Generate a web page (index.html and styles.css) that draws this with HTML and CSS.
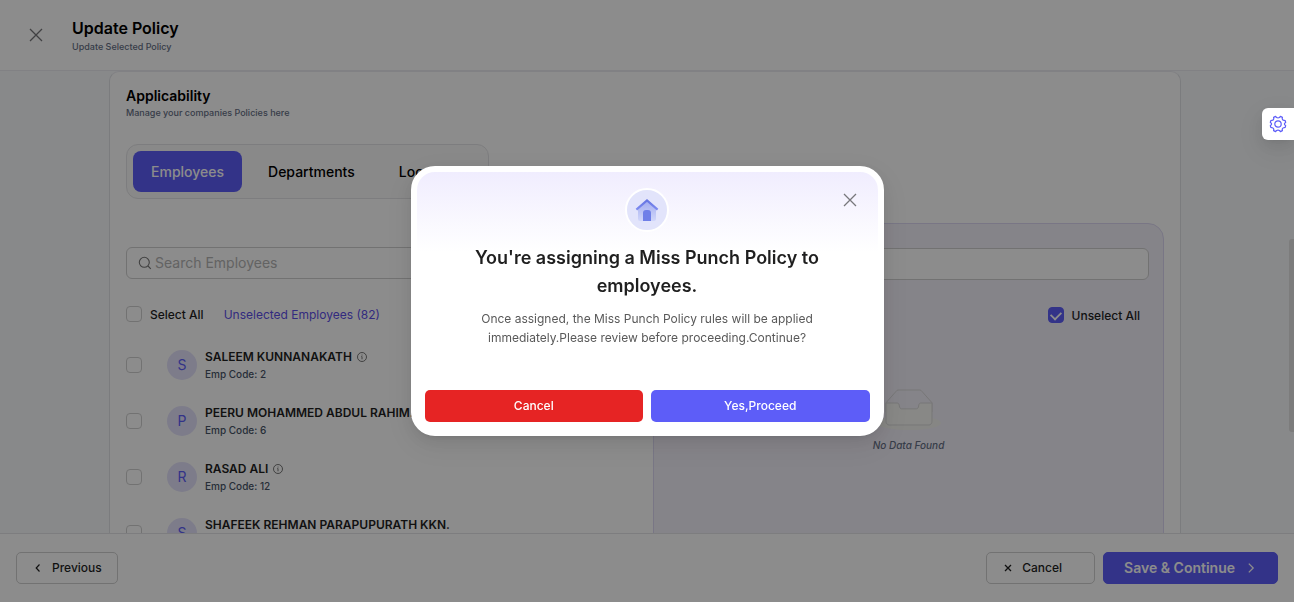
FILE: index.html
```html
<!DOCTYPE html>
<html lang="en">
<head>
<meta charset="utf-8">
<meta name="viewport" content="width=device-width, initial-scale=1">
<title>Update Policy</title>
<link rel="stylesheet" href="styles.css">
</head>
<body>
<svg class="defs" aria-hidden="true">
  <symbol id="close" viewBox="0 0 14 14"><path d="M1 1l12 12M13 1L1 13" fill="none" stroke="currentColor" stroke-width="1.3"/></symbol>
  <symbol id="info" viewBox="0 0 10 10"><circle cx="5" cy="5" r="4.5" fill="none" stroke="currentColor" stroke-width=".8"/><path d="M4.4 4.5H5v2.8M5 2.6v.9" fill="none" stroke="currentColor" stroke-width=".8"/></symbol>
</svg>
<div class="page">
  <header class="header">
    <button class="icon-button" type="button" aria-label="Close page"><svg class="icon-14"><use href="#close"/></svg></button>
    <div>
      <h1 class="header-title">Update Policy</h1>
      <p class="subtitle">Update Selected Policy</p>
    </div>
  </header>

  <main class="main">
    <section class="card">
      <h2 class="card-title">Applicability</h2>
      <p class="subtitle">Manage your companies Policies here</p>
      <nav class="tabs">
        <button class="tab tab-active" type="button">Employees</button>
        <button class="tab" type="button">Departments</button>
        <button class="tab" type="button">Locations</button>
      </nav>
      <div class="columns">
        <div class="list">
          <div class="search">
            <svg class="search-icon" viewBox="0 0 14 14"><circle cx="6.3" cy="6.3" r="5" fill="none" stroke="currentColor" stroke-width="1.1"/><path d="M10 10l2.8 2.8" stroke="currentColor" stroke-width="1.1"/></svg>
            <input class="search-input" type="text" placeholder="Search Employees" aria-label="Search employees">
          </div>
          <div class="toolbar">
            <label class="check-label"><input class="checkbox" type="checkbox">Select All</label>
            <a class="count" href="#">Unselected Employees (82)</a>
          </div>
          <ul class="employees">
            <li class="employee">
              <input class="checkbox" type="checkbox" aria-label="Saleem Kunnanakath">
              <span class="avatar">S</span>
              <div class="person"><div class="name">SALEEM KUNNANAKATH<svg class="info"><use href="#info"/></svg></div><div class="code">Emp Code: 2</div></div>
            </li>
            <li class="employee">
              <input class="checkbox" type="checkbox" aria-label="Peeru Mohammed Abdul Rahim">
              <span class="avatar">P</span>
              <div class="person"><div class="name">PEERU MOHAMMED ABDUL RAHIM.<svg class="info"><use href="#info"/></svg></div><div class="code">Emp Code: 6</div></div>
            </li>
            <li class="employee">
              <input class="checkbox" type="checkbox" aria-label="Rasad Ali">
              <span class="avatar">R</span>
              <div class="person"><div class="name">RASAD ALI<svg class="info"><use href="#info"/></svg></div><div class="code">Emp Code: 12</div></div>
            </li>
            <li class="employee">
              <input class="checkbox" type="checkbox" aria-label="Shafeek Rehman Parapupurath KKN.">
              <span class="avatar">S</span>
              <div class="person"><div class="name">SHAFEEK REHMAN PARAPUPURATH KKN.</div></div>
            </li>
          </ul>
        </div>
        <div class="list selected">
          <div class="search"><input class="search-input" type="text" aria-label="Search selected employees"></div>
          <div class="toolbar toolbar-end">
            <label class="check-label"><input class="checkbox" type="checkbox" checked>Unselect All</label>
          </div>
          <div class="empty">
            <svg class="empty-art" viewBox="0 0 64 41"><g transform="translate(0 1)"><ellipse fill="#f5f5f0" cx="32" cy="33" rx="32" ry="7"/><g stroke="#d9d9d9"><path fill="#f3f0fa" d="M55 12.76L44.854 1.258C44.367.474 43.656 0 42.907 0H21.093c-.749 0-1.46.474-1.947 1.257L9 12.761V22h46v-9.24z"/><path fill="#f7f7f4" d="M41.613 15.931c0-1.605.994-2.93 2.227-2.931H55v18.137C55 33.26 53.68 35 52.05 35h-40.1C10.32 35 9 33.259 9 31.137V13h11.16c1.233 0 2.227 1.323 2.227 2.928v.022c0 1.605 1.005 2.901 2.237 2.901h14.752c1.232 0 2.237-1.308 2.237-2.913v-.007z"/></g></g></svg>
            <p class="empty-text">No Data Found</p>
          </div>
        </div>
      </div>
    </section>
    <div class="scroll-thumb"></div>
  </main>

  <footer class="footer">
    <button class="button button-previous" type="button"><svg class="icon-10" viewBox="0 0 10 10"><path d="M6.5 1.5L3.2 5l3.3 3.5" fill="none" stroke="currentColor" stroke-width="1.2"/></svg>Previous</button>
    <div class="footer-actions">
      <button class="button button-cancel" type="button"><svg class="icon-10" viewBox="0 0 10 10"><path d="M2 2l6 6M8 2L2 8" stroke="currentColor" stroke-width="1.3"/></svg>Cancel</button>
      <button class="button button-save" type="button">Save &amp; Continue<svg class="icon-10" viewBox="0 0 10 10"><path d="M1.8.6L6.2 5 1.8 9.4" fill="none" stroke="currentColor" stroke-width="1.3"/></svg></button>
    </div>
  </footer>
</div>

<div class="overlay">
  <div class="dialog" role="dialog" aria-modal="true" aria-labelledby="dialog-title">
    <button class="icon-button dialog-close" type="button" aria-label="Close"><svg class="icon-14"><use href="#close"/></svg></button>
    <div class="dialog-body">
      <svg class="badge" viewBox="0 0 44 44">
        <defs>
          <linearGradient id="wall" x1="0" x2="0" y1="0" y2="1"><stop offset="0" stop-color="#a3adf0"/><stop offset="1" stop-color="#d0d6fa"/></linearGradient>
          <linearGradient id="roof" x1="0" x2="0" y1="0" y2="1"><stop offset="0" stop-color="#6675e2"/><stop offset="1" stop-color="#7d8bf0"/></linearGradient>
        </defs>
        <circle cx="22" cy="22" r="21" fill="#e2e4fb" stroke="#fff" stroke-width="2"/>
        <path d="M13 20l9-7 9 7v11a2 2 0 0 1-2 2H15a2 2 0 0 1-2-2z" fill="url(#wall)"/>
        <path d="M18 33v-8a3 3 0 0 1 3-3h2a3 3 0 0 1 3 3v8z" fill="#6f7fe8"/>
        <path d="M11.4 21.6L22 12.4l10.6 9.2" fill="none" stroke="url(#roof)" stroke-width="2.2"/>
      </svg>
      <h2 class="dialog-title" id="dialog-title">You're assigning a Miss Punch Policy to employees.</h2>
      <p class="dialog-text">Once assigned, the Miss Punch Policy rules will be applied immediately.Please review before proceeding.Continue?</p>
    </div>
    <div class="dialog-actions">
      <button class="button button-danger" type="button">Cancel</button>
      <button class="button button-primary" type="button">Yes,Proceed</button>
    </div>
  </div>
</div>
<button class="settings" type="button" aria-label="Settings">
  <svg class="settings-icon" viewBox="0 0 18 18" fill="none" stroke="currentColor" stroke-width="1.2" stroke-linejoin="round"><circle cx="9" cy="9" r="3.2"/><path d="M6.6 1.4L7.5 2.5Q9 3.1 10.5 2.5L11.4 1.4L13.4 2.4L13.2 3.8Q13.6 5.2 15 5.4L16.2 5.6L16.7 7.4L15.7 8.2Q15.2 9 15.7 9.8L16.7 10.6L16.2 12.4L15 12.6Q13.6 12.8 13.2 14.2L13.4 15.6L11.4 16.6L10.5 15.5Q9 14.9 7.5 15.5L6.6 16.6L4.6 15.6L4.8 14.2Q4.4 12.8 3 12.6L1.8 12.4L1.3 10.6L2.3 9.8Q2.8 9 2.3 8.2L1.3 7.4L1.8 5.6L3 5.4Q4.4 5.2 4.8 3.8L4.6 2.4Z"/></svg>
</button>
</body>
</html>
```
FILE: styles.css
```css
* { box-sizing: border-box; }
body, h1, h2, p, ul { margin: 0; padding: 0; }
body { font-family: Inter, "Liberation Sans", sans-serif; font-size: 12px; color: #1f1f1f; }
button, input { font: inherit; color: inherit; }
button { cursor: pointer; }
.defs { position: absolute; width: 0; height: 0; }

.page { display: flex; flex-direction: column; height: 100vh; background: #f8fafc; }
.header { display: flex; align-items: center; gap: 22px; flex: none; padding: 16px 22px; background: #fff; border-bottom: 1px solid #ececf1; }
.icon-button { display: flex; align-items: center; justify-content: center; width: 28px; height: 28px; padding: 0; border: 0; background: none; color: #77777b; }
.icon-14 { width: 14px; height: 14px; }
.icon-10 { width: 10px; height: 10px; }
.header-title { font-size: 16px; line-height: 24px; font-weight: 600; color: #000; }
.subtitle { font-size: 9px; line-height: 14px; font-weight: 500; color: #667085; }

.main { position: relative; flex: 1; min-height: 0; overflow: hidden; padding: 0 4px 0 0; }
.card { max-width: 1072px; margin: 0 auto; padding: 13px 16px; background: #fff; border: 1px solid #e0e2e6; border-top-color: #ececf1; border-radius: 10px 10px 0 0; }
.card-title { font-size: 14px; line-height: 21px; font-weight: 600; color: #000; }
.tabs { display: flex; gap: 8px; width: fit-content; margin: 24px 0; padding: 6px; background: #fafafa; border: 1px solid #e4e4e7; border-radius: 12px; }
.tab { padding: 10px 18px; border: 0; border-radius: 8px; background: none; font-size: 14px; line-height: 21px; font-weight: 500; color: #000; }
.tab-active { background: #5d5df8; color: #fff; }

.columns { display: grid; grid-template-columns: 1fr 1fr; gap: 16px; }
.list { padding: 24px 0 0; min-width: 0; }
.selected { padding: 24px 14px 80px; background: #f3f0fa; border: 1px solid #dcd8f2; border-radius: 16px 16px 0 0; }
.search { display: flex; align-items: center; gap: 3px; height: 32px; padding: 0 11px 1px; background: #fff; border: 1px solid #d0d0d0; border-radius: 6px; }
.search-icon { width: 14px; height: 14px; flex: none; color: #777; }
.search-input { flex: 1; min-width: 0; padding: 0; border: 0; outline: 0; background: none; font-size: 14px; }
.search-input::placeholder { color: #b4b4b4; }
.toolbar { display: flex; align-items: center; gap: 20px; height: 24px; margin-top: 23px; }
.toolbar-end { justify-content: flex-end; padding-right: 9px; }
.check-label { display: flex; align-items: center; gap: 8px; font-weight: 500; }
.checkbox { appearance: none; width: 16px; height: 16px; flex: none; margin: 0; background: #fff; border: 1px solid #d0d0d0; border-radius: 4px; }
.checkbox:checked { display: grid; place-items: center; background: #5d5df8; border-color: #5d5df8; }
.checkbox:checked::after { content: ""; width: 6px; height: 9px; border: solid #fff; border-width: 0 2px 2px 0; transform: translateY(-1px) rotate(45deg) scale(0.9); }
.count { color: #5d4fe8; text-decoration: none; }
.employees { list-style: none; margin-top: 11px; }
.employee { display: flex; align-items: center; height: 56px; }
.avatar { width: 30px; height: 30px; margin: 0 8px 0 25px; border-radius: 50%; background: #e4e2fb; color: #5d5df8; font-size: 14px; line-height: 30px; text-align: center; }
.person { min-height: 35px; }
.name { display: flex; align-items: center; gap: 5px; font-size: 12px; line-height: 18px; font-weight: 600; white-space: nowrap; }
.info { width: 10px; height: 10px; color: #555; }
.code { font-size: 10px; line-height: 17px; font-weight: 500; color: #475467; }
.empty { display: flex; flex-direction: column; align-items: center; margin-top: 62px; }
.empty-art { width: 64px; height: 41px; }
.empty-text { margin-top: 8px; font-size: 10px; line-height: 14px; font-style: italic; font-weight: 500; color: #667085; }
.scroll-thumb { position: absolute; right: 0; top: 168px; width: 5px; height: 193px; border-radius: 3px 0 0 3px; background: #e2e2e2; }

.footer { display: flex; justify-content: space-between; flex: none; padding: 18px 16px; background: #fff; border-top: 1px solid #e4e4e7; }
.footer-actions { display: flex; gap: 8px; }
.button { display: flex; align-items: center; justify-content: center; gap: 9px; height: 32px; padding: 0 16px 1px; background: #fff; border: 1px solid #d0d0d0; border-radius: 5px; font-size: 12px; font-weight: 500; white-space: nowrap; }
.button-previous { padding-right: 15px; }
.button-cancel { padding-right: 32px; }
.button-save { gap: 12px; padding: 0 20px 1px; background: #5d5df8; border-color: #5d5df8; color: #fff; font-size: 14px; font-weight: 600; }

.overlay { position: fixed; inset: 0; display: flex; align-items: center; justify-content: center; background: rgba(0, 0, 0, 0.45); }
.dialog { position: relative; width: 473px; max-width: 100%; padding-bottom: 8px; background: #fff; border: 6px solid #fff; border-radius: 24px; box-shadow: 0 6px 16px rgba(0, 0, 0, 0.08), 0 3px 6px -4px rgba(0, 0, 0, 0.12), 0 9px 28px 8px rgba(0, 0, 0, 0.05); }
.dialog-body { display: flex; flex-direction: column; align-items: center; padding: 16px 48px 0; border-radius: 18px 18px 0 0; background: linear-gradient(#f0edfe, #fff 80px); text-align: center; }
.dialog-close { position: absolute; right: 14px; top: 14px; }
.badge { width: 44px; height: 44px; }
.dialog-title { margin-top: 12px; font-size: 18px; line-height: 28px; font-weight: 600; }
.dialog-text { margin-top: 9px; font-size: 12px; line-height: 19px; color: #595959; }
.dialog-actions { display: flex; gap: 8px; margin-top: 43px; padding: 0 8px; }
.dialog-actions .button { flex: 1; border: 0; color: #fff; }
.button-danger { background: #e62424; }
.button-primary { background: #5d5df8; }
.settings { position: fixed; right: 0; top: 108px; display: flex; align-items: center; justify-content: center; width: 32px; height: 32px; padding: 0; border: 0; border-radius: 6px 0 0 6px; background: #fff; color: #5d5df8; box-shadow: 0 6px 16px rgba(0, 0, 0, 0.08), 0 3px 6px -4px rgba(0, 0, 0, 0.12), 0 9px 28px 8px rgba(0, 0, 0, 0.05); }
.settings-icon { width: 18px; height: 18px; }
```
